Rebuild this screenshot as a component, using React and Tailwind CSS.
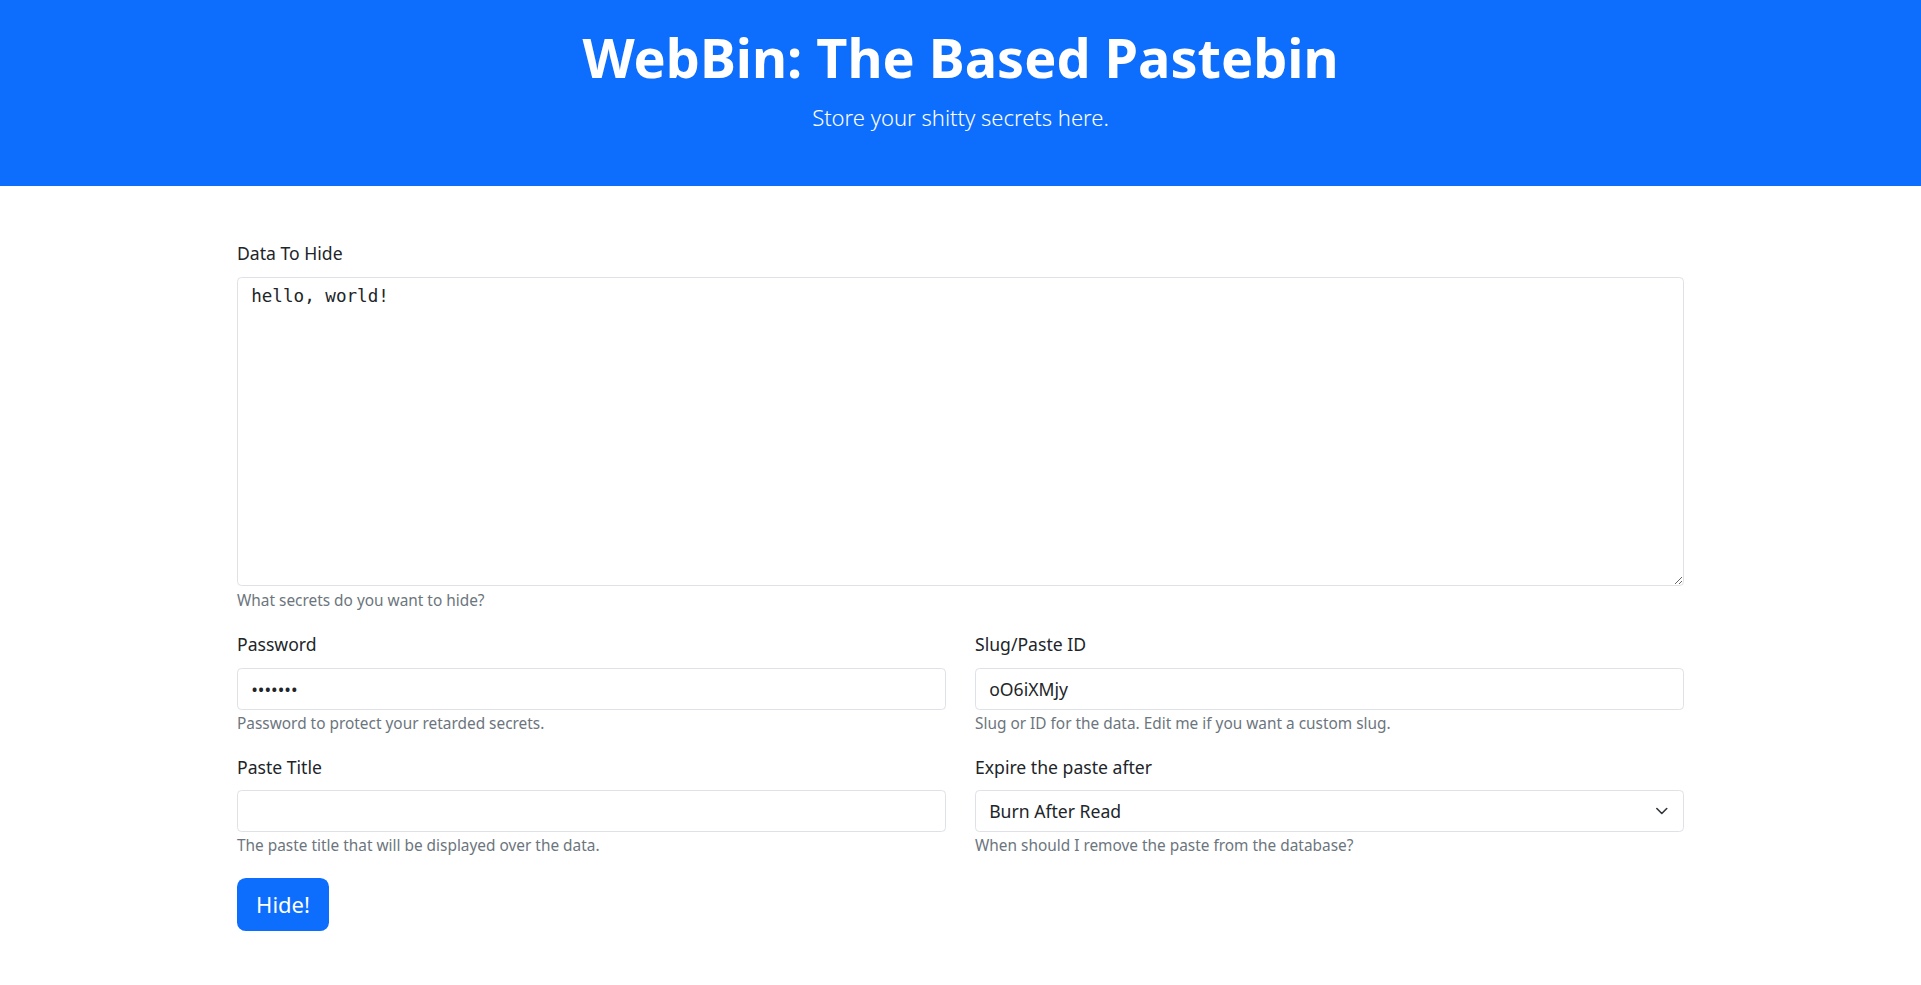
import React, { useState } from 'react';

const Field = ({ label, help, children, labelGap = 'mb-[10px]', helpGap = 'mt-[2.5px]' }) => (
  <div>
    <label className={`block text-[17.6px] leading-[26.4px] text-[#212529] ${labelGap}`}>{label}</label>
    {children}
    <div className={`${helpGap} text-[15.4px] leading-[23.1px] text-[#6c757d]`}>{help}</div>
  </div>
);

const inputCls =
  'block w-full h-[41.8px] px-[13.2px] border border-[#dee2e6] rounded-[4.4px] bg-white text-[17.6px] text-[#212529] outline-none';

const App = () => {
  const [data, setData] = useState('hello, world!');
  const [password, setPassword] = useState('hunter2');
  const [slug, setSlug] = useState('oO6iXMjy');
  const [title, setTitle] = useState('');
  const [expire, setExpire] = useState('burn');

  return (
    <div className="min-h-screen bg-white font-['Noto_Sans',sans-serif]">
      <header className="h-[186px] bg-[#0d6efd] pt-[25px] text-center text-white">
        <h1 className="text-[54px] leading-[64.8px] font-bold">WebBin: The Based Pastebin</h1>
        <p className="mt-[11px] text-[22px] leading-[33px] font-light">Store your shitty secrets here.</p>
      </header>

      <form className="w-[1447px] mx-auto pt-[54px]" onSubmit={(e) => e.preventDefault()}>
        <Field label="Data To Hide" help="What secrets do you want to hide?" labelGap="mb-[11px]">
          <textarea
            value={data}
            onChange={(e) => setData(e.target.value)}
            className="block w-full h-[309px] px-[13.2px] pt-[5px] pb-[6.6px] border border-[#dee2e6] rounded-[4.4px] text-[17.6px] leading-[26.4px] text-[#212529] outline-none font-['DejaVu_Sans_Mono',monospace]"
          />
        </Field>

        <div className="grid grid-cols-2 gap-x-[29px] mt-[19.4px]">
          <Field label="Password" help="Password to protect your retarded secrets.">
            <input type="password" value={password} onChange={(e) => setPassword(e.target.value)} className={inputCls} />
          </Field>
          <Field label="Slug/Paste ID" help="Slug or ID for the data. Edit me if you want a custom slug.">
            <input type="text" value={slug} onChange={(e) => setSlug(e.target.value)} className={inputCls} />
          </Field>
        </div>

        <div className="grid grid-cols-2 gap-x-[29px] mt-[18.4px]">
          <Field label="Paste Title" help="The paste title that will be displayed over the data.">
            <input type="text" value={title} onChange={(e) => setTitle(e.target.value)} className={inputCls} />
          </Field>
          <Field label="Expire the paste after" help="When should I remove the paste from the database?">
            <div className="relative">
              <select
                value={expire}
                onChange={(e) => setExpire(e.target.value)}
                className={`${inputCls} appearance-none pr-[40px]`}
              >
                <option value="burn">Burn After Read</option>
                <option value="10m">10 Minutes</option>
                <option value="1h">1 Hour</option>
                <option value="1d">1 Day</option>
                <option value="1w">1 Week</option>
                <option value="never">Never</option>
              </select>
              <svg
                className="pointer-events-none absolute right-[13.2px] top-1/2 -translate-y-1/2"
                width="17.6"
                height="13.2"
                viewBox="0 0 16 16"
              >
                <path d="m2 5 6 6 6-6" fill="none" stroke="#343a40" strokeWidth="2" strokeLinecap="round" strokeLinejoin="round" />
              </svg>
            </div>
          </Field>
        </div>

        <button
          type="submit"
          className="mt-[21px] h-[52.4px] w-[92px] rounded-[8.8px] bg-[#0d6efd] text-[22px] text-white"
        >
          Hide!
        </button>
      </form>
    </div>
  );
};

export default App;
